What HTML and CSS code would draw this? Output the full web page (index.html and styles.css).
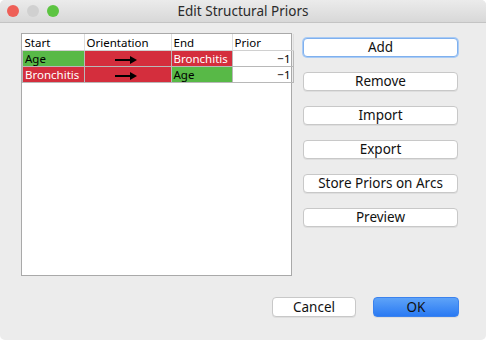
FILE: index.html
```html
<!DOCTYPE html>
<html lang="en">

<head>
    <meta charset="UTF-8" />
    <title>Edit Structural Priors</title>
    <link rel="stylesheet" href="styles.css">
</head>

<body>
    <div class="window">
        <div class="titlebar">
            <div class="lights">
                <span class="light red"></span>
                <span class="light gray"></span>
                <span class="light green"></span>
            </div>
            <div class="title">Edit Structural Priors</div>
        </div>

        <div class="content">
            <div class="table-panel">
                <table class="priors">
                    <thead>
                        <tr>
                            <th class="c-start">Start</th>
                            <th class="c-orient">Orientation</th>
                            <th class="c-end">End</th>
                            <th class="c-prior">Prior</th>
                        </tr>
                    </thead>
                    <tbody>
                        <tr>
                            <td class="cell-green">Age</td>
                            <td class="cell-red arrow-cell"><span class="arrow"></span></td>
                            <td class="cell-red">Bronchitis</td>
                            <td class="num">&minus;1</td>
                        </tr>
                        <tr>
                            <td class="cell-red">Bronchitis</td>
                            <td class="cell-red arrow-cell"><span class="arrow"></span></td>
                            <td class="cell-green">Age</td>
                            <td class="num">&minus;1</td>
                        </tr>
                    </tbody>
                </table>
            </div>

            <div class="side-buttons">
                <button class="btn focused">Add</button>
                <button class="btn">Remove</button>
                <button class="btn">Import</button>
                <button class="btn">Export</button>
                <button class="btn">Store Priors on Arcs</button>
                <button class="btn">Preview</button>
            </div>
        </div>

        <div class="footer">
            <button class="btn cancel">Cancel</button>
            <button class="btn ok">OK</button>
        </div>
    </div>
</body>

</html>
```

FILE: styles.css
```css
body {
    margin: 0;
    padding: 0;
    background: #ffffff;
    font-family: 'Noto Sans', 'Liberation Sans', sans-serif;
}

.window {
    width: 486px;
    height: 340px;
    background: #ececec;
    border-radius: 5px;
    overflow: hidden;
}

.titlebar {
    height: 22px;
    border-bottom: 1px solid #c4c4c4;
    background: linear-gradient(#ebebeb, #d8d8d8);
    display: flex;
    align-items: center;
}

.lights {
    display: flex;
    gap: 8px;
    padding-left: 7px;
    width: 120px;
}

.light {
    width: 12px;
    height: 12px;
    border-radius: 50%;
}

.light.red {
    background: #ee5f57;
}

.light.gray {
    background: #d0d0d0;
}

.light.green {
    background: #5cc441;
}

.title {
    flex: 1;
    padding-right: 127px;
    text-align: center;
    font-size: 13.5px;
    color: #2b2b2b;
}

.content {
    display: flex;
    padding: 10px 0 0 21px;
}

.table-panel {
    width: 269px;
    height: 241px;
    border: 1px solid #a9a9a9;
    background: #fff;
}

.priors {
    border-collapse: collapse;
    font-size: 11.5px;
    color: #000;
    table-layout: fixed;
    width: 267px;
}

.priors th,
.priors td {
    height: 15px;
    padding: 0 2px;
    line-height: 15px;
    white-space: nowrap;
    overflow: hidden;
}

.priors th {
    font-weight: normal;
    text-align: left;
    border-right: 1px solid #dedede;
    border-bottom: 1px solid #d0d0d0;
    height: 16px;
}

.priors td {
    border: 1px solid #b8b8b8;
}

.c-start { width: 57px; }
.c-orient { width: 82px; }
.c-end { width: 56px; }
.c-prior { width: 56px; }

.cell-green {
    background: #58b947;
}

.cell-red {
    background: #d42e3d;
    color: #fff;
}

.num {
    text-align: right;
}

.arrow-cell {
    text-align: center;
}

.arrow {
    display: inline-block;
    position: relative;
    width: 16px;
    height: 2px;
    background: #000;
    vertical-align: middle;
    margin-right: 10px;
}

.arrow::after {
    content: "";
    position: absolute;
    left: 15px;
    top: -3px;
    border-left: 7px solid #000;
    border-top: 4px solid transparent;
    border-bottom: 4px solid transparent;
}

.side-buttons {
    display: flex;
    flex-direction: column;
    gap: 15px;
    margin-left: 11px;
    padding-top: 5px;
}

.btn {
    font-family: 'Noto Sans', 'Liberation Sans', sans-serif;
    font-size: 13.5px;
    color: #111;
    background: #fff;
    border: 1px solid #c8c8c8;
    border-radius: 4px;
    height: 19px;
    padding: 0;
    line-height: 17px;
    box-shadow: 0 1px 0 rgba(0, 0, 0, 0.06);
}

.side-buttons .btn {
    width: 155px;
}

.btn.focused {
    border-color: #7fb0ee;
    box-shadow: 0 0 0 1px #a9cbf5;
}

.footer {
    display: flex;
    justify-content: flex-end;
    gap: 17px;
    padding: 21px 27px 0 0;
}

.cancel {
    width: 84px;
    height: 20px;
}

.ok {
    width: 86px;
    height: 20px;
    background: linear-gradient(#5ea3f8, #2a7af3);
    border-color: #3b82ee;
}
```
